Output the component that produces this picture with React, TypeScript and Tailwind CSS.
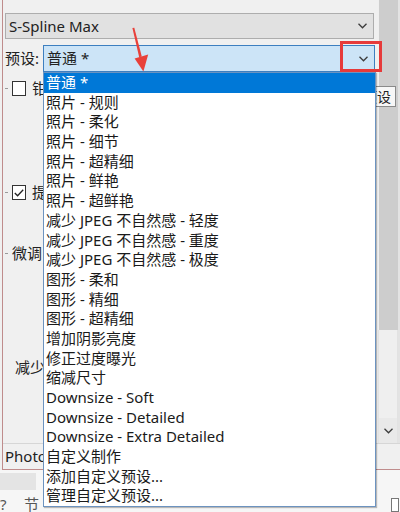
import React from "react"

const items = [
  "普通 *",
  "照片 - 规则",
  "照片 - 柔化",
  "照片 - 细节",
  "照片 - 超精细",
  "照片 - 鲜艳",
  "照片 - 超鲜艳",
  "减少 JPEG 不自然感 - 轻度",
  "减少 JPEG 不自然感 - 重度",
  "减少 JPEG 不自然感 - 极度",
  "图形 - 柔和",
  "图形 - 精细",
  "图形 - 超精细",
  "增加阴影亮度",
  "修正过度曝光",
  "缩减尺寸",
  "Downsize - Soft",
  "Downsize - Detailed",
  "Downsize - Extra Detailed",
  "自定义制作",
  "添加自定义预设...",
  "管理自定义预设...",
]

function Chevron() {
  return (
    <svg width="9" height="6" viewBox="0 0 9 6" className="shrink-0">
      <polyline points="0.5,0.8 4.5,4.8 8.5,0.8" fill="none" stroke="#3c3c3c" strokeWidth="1.3" />
    </svg>
  )
}

function Dash() {
  return <span className="ml-[2px] h-px w-[3px] shrink-0 bg-[#9a9a9a]" />
}

export default function App() {
  return (
    <div
      className="relative h-[512px] w-[400px] overflow-hidden bg-[#f0f0f0] text-[15px] text-[#222]"
      style={{ fontFamily: '"Noto Sans", "Noto Sans CJK SC", sans-serif' }}
    >
      {/* window */}
      <div className="ml-[2px] flex h-[470px] flex-col border-b border-l border-[#bf8c8c]">
        <div className="flex h-[443px]">
          {/* main content */}
          <div className="flex w-[375px] flex-col pt-[13px]">
            <div className="ml-[2px] flex h-[26px] w-[369px] items-center justify-between border border-[#adadad] bg-[#e1e1e1] pl-[3px] pr-[6px]">
              <span className="leading-none">S-Spline Max</span>
              <Chevron />
            </div>

            <div className="mt-[6px] flex h-[27px] items-center">
              <span className="w-[40px] pl-[2px] leading-none">预设:</span>
              <div className="flex h-full w-[332px] items-center justify-between border border-[#3d7fc0] bg-[#cce4f7] pl-[3px] pr-[6px]">
                <span className="leading-none">普通 *</span>
                <Chevron />
              </div>
            </div>

            <div className="mt-[9px] flex h-[15px] items-center">
              <Dash />
              <span className="ml-[4px] h-[15px] w-[14px] shrink-0 border border-[#333] bg-white" />
              <span className="ml-[6px] leading-none">钳</span>
            </div>

            <div className="mt-[89px] flex h-[15px] items-center">
              <Dash />
              <span className="ml-[4px] flex h-[15px] w-[14px] shrink-0 items-center justify-center border border-[#333] bg-white">
                <svg width="10" height="8" viewBox="0 0 10 8">
                  <polyline points="0.8,4 3.6,6.8 9.2,0.8" fill="none" stroke="#222" strokeWidth="1.3" />
                </svg>
              </span>
              <span className="ml-[6px] leading-none">提</span>
            </div>

            <div className="mt-[43px] flex h-[20px] items-center">
              <Dash />
              <span className="ml-[4px] leading-none">微调</span>
            </div>

            <div className="mt-[94px] flex h-[20px] items-center pl-[12px]">
              <span className="leading-none">减少</span>
            </div>
          </div>

          {/* scrollbar */}
          <div className="flex w-[20px] flex-col bg-[#efefef]">
            <div className="ml-[1px] h-[330px] w-[19px] bg-[#cdcdcd]" />
            <div className="flex-1 border-x border-[#e2e2e2]" />
            <div className="flex h-[25px] items-center justify-center border-x border-[#e2e2e2] bg-[#e9e9e9]">
              <Chevron />
            </div>
          </div>
          <div className="w-[2px] bg-[#e3e3e3]" />
        </div>

        <div className="flex h-[26px] items-center border-t border-[#d6d6d6] pl-[2px]">
          <span className="leading-none">Photo</span>
        </div>
      </div>

      {/* area below window */}
      <div className="flex h-[42px] flex-col bg-[#f6f6f6] pt-[3px]">
        <div className="h-[17px] w-[36px] bg-[#e4e4e4]" />
        <div className="mt-[7px] flex items-center text-[#555]">
          <span className="w-[24px] leading-none">?</span>
          <span className="flex-1 leading-none">节</span>
          <span className="mr-[1px] h-[14px] w-[8px] border border-[#777] bg-white" />
        </div>
      </div>

      {/* tooltip behind dropdown */}
      <div className="absolute left-[358px] top-[86px] flex h-[21px] items-center border border-[#8a8a8a] bg-[#f7f7f7] px-[4px] text-[14px] leading-none">
        预设
      </div>

      {/* open dropdown */}
      <div className="absolute left-[43px] top-[72px] w-[333px] border border-[#6c93c0] bg-white shadow-[1px_1px_1px_rgba(0,0,0,0.25)]">
        {items.map((label, i) => (
          <div
            key={label}
            className={`h-[19.7px] whitespace-nowrap pl-[2px] leading-[19.7px] ${
              i === 0 ? "bg-[#0078d7] text-white" : "text-[#1a1a1a]"
            }`}
          >
            {label}
          </div>
        ))}
      </div>

      {/* annotation: red box */}
      <div className="absolute left-[340px] top-[41px] h-[31px] w-[42px] border-[3px] border-[#e63a3a]" />

      {/* annotation: red arrow */}
      <svg className="absolute left-0 top-0" width="400" height="512" viewBox="0 0 400 512">
        <polygon points="132.4,28 134.3,27.8 141.8,56.5 139.2,57.3" fill="#e8403a" />
        <polygon points="134.6,58.6 148.2,54.4 143.4,71.5" fill="#e8403a" />
      </svg>
    </div>
  )
}
